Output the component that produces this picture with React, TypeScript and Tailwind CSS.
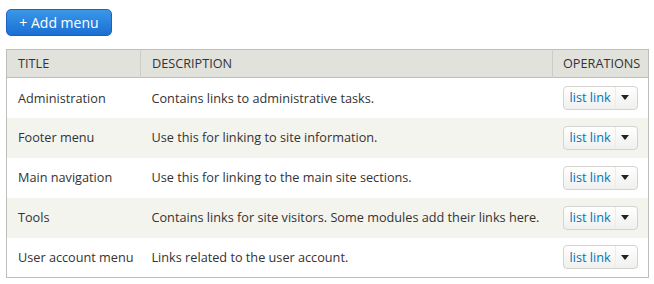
import React from "react";

const rows = [
  ["Administration", "Contains links to administrative tasks."],
  ["Footer menu", "Use this for linking to site information."],
  ["Main navigation", "Use this for linking to the main site sections."],
  ["Tools", "Contains links for site visitors. Some modules add their links here."],
  ["User account menu", "Links related to the user account."],
];

export default function App() {
  return (
    <div className="w-[654px] h-[284px] bg-white px-[6px] pt-[9px] text-[#333]" style={{ fontFamily: '"Open Sans", "Noto Sans", sans-serif' }}>
      <button className="h-[27px] w-[106px] rounded-[5px] border border-[#1e62c0] bg-gradient-to-b from-[#3a97e8] to-[#1a6fd3] text-[14px] text-white leading-none flex items-center justify-center">
        + Add menu
      </button>
      <table className="mt-[13px] w-[643px] border border-[#bfbfba] border-collapse text-[12.7px]">
        <thead>
          <tr className="bg-[#e1e2dc] h-[28px] border-b border-[#bfbfba]">
            <th className="text-left font-normal pl-[11px] w-[134px] border-r border-[#cdcdc8]">TITLE</th>
            <th className="text-left font-normal pl-[11px] border-r border-[#cdcdc8]">DESCRIPTION</th>
            <th className="text-left font-normal pl-[10px] w-[96px]">OPERATIONS</th>
          </tr>
        </thead>
        <tbody>
          {rows.map(([t, d], i) => (
            <tr key={t} className={`h-[40px] ${i % 2 === 1 ? "bg-[#f3f4ee]" : "bg-white"}`}>
              <td className="pl-[11px] pt-[1px]">{t}</td>
              <td className="pl-[11px] pt-[1px]">{d}</td>
              <td className="pl-[10px]">
                <div className="flex items-center h-[24px] w-[75px] rounded-[4px] border border-[#d3d3d0] bg-gradient-to-b from-white to-[#f0f0ee]">
                  <span className="pl-[6px] pr-[4px] text-[#0074bd]">list link</span>
                  <span className="h-full border-l border-[#ececea] flex items-center pl-[5px]">
                    <svg width="8" height="5" viewBox="0 0 8 5"><path d="M0 0h8L4 5z" fill="#222" /></svg>
                  </span>
                </div>
              </td>
            </tr>
          ))}
        </tbody>
      </table>
    </div>
  );
}
